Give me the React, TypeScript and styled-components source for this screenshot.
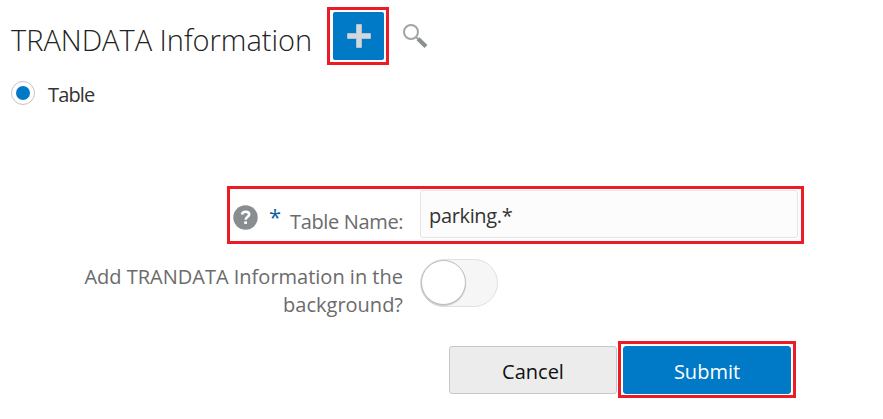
import React from 'react';
import styled, { createGlobalStyle } from 'styled-components';

const GlobalStyle = createGlobalStyle`
  * { box-sizing: border-box; }
  body {
    margin: 0;
    background: #fff;
    font-family: "Open Sans", "Segoe UI", sans-serif;
    font-size: 20px;
    line-height: 28px;
    color: #333;
  }
`;

const Page = styled.main`
  display: flex;
  flex-direction: column;
  width: 883px;
  height: 419px;
  overflow: hidden;
`;

const Header = styled.header`
  display: flex;
  align-items: flex-start;
  padding: 7px 0 0 11px;
`;

const Title = styled.h1`
  width: 316px;
  margin: 12px 0 0;
  font-size: 29px;
  font-weight: 340;
  line-height: 41px;
  letter-spacing: -0.03px;
  white-space: nowrap;
  color: #222;
`;

const Highlight = styled.div<{ $pad: string }>`
  display: flex;
  border: 3px solid #ed1c24;
  padding: ${({ $pad }) => $pad};
`;

const AddButton = styled.button`
  display: grid;
  place-items: center;
  width: 51px;
  height: 48px;
  padding: 0;
  border: 0;
  border-radius: 2px;
  background: #007ac7;
`;

const SearchButton = styled.button`
  display: flex;
  margin: 17px 0 0 14px;
  padding: 0;
  border: 0;
  background: none;
`;

const RadioRow = styled.label`
  display: flex;
  align-items: center;
  gap: 13px;
  margin-top: 14px;
  padding-left: 11px;
  height: 28px;
`;

const RadioMark = styled.span`
  display: grid;
  place-items: center;
  width: 24px;
  height: 24px;
  border: 1px solid #c4c4c4;
  border-radius: 50%;

  &::after {
    content: '';
    width: 14px;
    height: 14px;
    border-radius: 50%;
    background: #007ac7;
  }
`;

const RadioText = styled.span`
  padding-top: 3px;
  letter-spacing: -0.85px;
`;

const Form = styled.form`
  display: flex;
  flex-direction: column;
  margin-top: 79px;
  padding-left: 83px;
`;

const FieldFrame = styled(Highlight)`
  width: 577px;
  height: 58px;
  margin-left: 144px;
`;

const Required = styled.span`
  width: 12px;
  margin: 12px 0 0 11px;
  font-size: 22px;
  color: #0b5fa5;
`;

const FieldLabel = styled.label`
  width: 130px;
  margin: 18px 0 0 9px;
  letter-spacing: -0.35px;
  white-space: nowrap;
  color: #6b6b6b;
`;

const HelpIcon = styled.svg`
  flex: none;
  margin-top: 15px;
`;

const TextInput = styled.input`
  width: 378px;
  height: 48px;
  padding: 2px 8px 0 8px;
  border: 1px solid #e4e4e4;
  border-radius: 3px;
  background: #fcfcfc;
  color: #333;
  font: inherit;
  letter-spacing: -0.35px;
  outline: none;
`;

const ToggleRow = styled.div`
  display: flex;
  gap: 17px;
  height: 48px;
  margin-top: 15px;
`;

const ToggleLabel = styled.div`
  width: 320px;
  margin-top: 4px;
  text-align: right;
  color: #6b6b6b;
`;

const Line = styled.span`
  display: block;
  white-space: nowrap;
`;

const Toggle = styled.div`
  display: flex;
  width: 78px;
  height: 48px;
  border: 1px solid #e1e1e1;
  border-radius: 24px;
  background: #f6f6f6;
`;

const Knob = styled.span`
  width: 45px;
  height: 45px;
  border: 1px solid #bdbdbd;
  border-radius: 50%;
  background: #fff;
  box-shadow: 0 1px 1px rgba(0, 0, 0, 0.2);
`;

const Actions = styled.div`
  display: flex;
  gap: 1px;
  height: 57px;
  margin: 34px 0 0 366px;
`;

const ActionButton = styled.button<{ $primary?: boolean }>`
  width: 168px;
  height: 48px;
  padding: 3px 0 0;
  border: 1px solid ${({ $primary }) => ($primary ? '#007ac7' : '#c7c7c7')};
  border-radius: 3px;
  background: ${({ $primary }) => ($primary ? '#007ac7' : '#ececec')};
  color: ${({ $primary }) => ($primary ? '#fff' : '#111')};
  font: inherit;
`;

const CancelSlot = styled.div`
  padding-top: 5px;
`;

export default function App() {
  return (
    <Page>
      <GlobalStyle />
      <Header>
        <Title>TRANDATA Information</Title>
        <Highlight $pad="2px 2px 2px 3px">
          <AddButton aria-label="Add">
            <svg width="24" height="24" viewBox="0 0 24 24">
              <path d="M9.5.5h5v9h9v5h-9v9h-5v-9h-9v-5h9z" fill="#d3d6da" stroke="#d3d6da" strokeWidth="0.6" strokeLinejoin="round" />
            </svg>
          </AddButton>
        </Highlight>
        <SearchButton aria-label="Search">
          <svg width="25" height="25" viewBox="0 0 25 25" fill="none">
            <circle cx="8" cy="8" r="7" stroke="#a1a5a7" strokeWidth="2" />
            <path d="M12.8 12.8l2.2 2.2" stroke="#a1a5a7" strokeWidth="2" />
            <path d="M15 14.8l8 7.8" stroke="#8b8f91" strokeWidth="4.2" />
          </svg>
        </SearchButton>
      </Header>
      <RadioRow>
        <RadioMark />
        <RadioText>Table</RadioText>
      </RadioRow>
      <Form>
        <FieldFrame $pad="1px 3px">
          <HelpIcon width="25" height="25" viewBox="0 0 25 25" fill="none">
            <circle cx="12.5" cy="12.5" r="12.2" fill="#8a8d8f" />
            <path d="M9 9.5C9.2 7.6 10.5 6.7 12.6 6.7c2.2 0 3.6 1.1 3.6 2.8 0 2.2-3.5 2.4-3.5 5.2" stroke="#fff" strokeWidth="2.6" />
            <path d="M11.2 16.4H14v2.5h-2.8z" fill="#fff" />
          </HelpIcon>
          <Required>*</Required>
          <FieldLabel htmlFor="table-name">Table Name:</FieldLabel>
          <TextInput id="table-name" defaultValue="parking.*" />
        </FieldFrame>
        <ToggleRow>
          <ToggleLabel>
            <Line>Add TRANDATA Information in the</Line>
            <Line>background?</Line>
          </ToggleLabel>
          <Toggle role="switch" aria-checked="false">
            <Knob />
          </Toggle>
        </ToggleRow>
        <Actions>
          <CancelSlot>
            <ActionButton type="button">Cancel</ActionButton>
          </CancelSlot>
          <Highlight $pad="2px 2px 1px 2px">
            <ActionButton type="button" $primary>Submit</ActionButton>
          </Highlight>
        </Actions>
      </Form>
    </Page>
  );
}
